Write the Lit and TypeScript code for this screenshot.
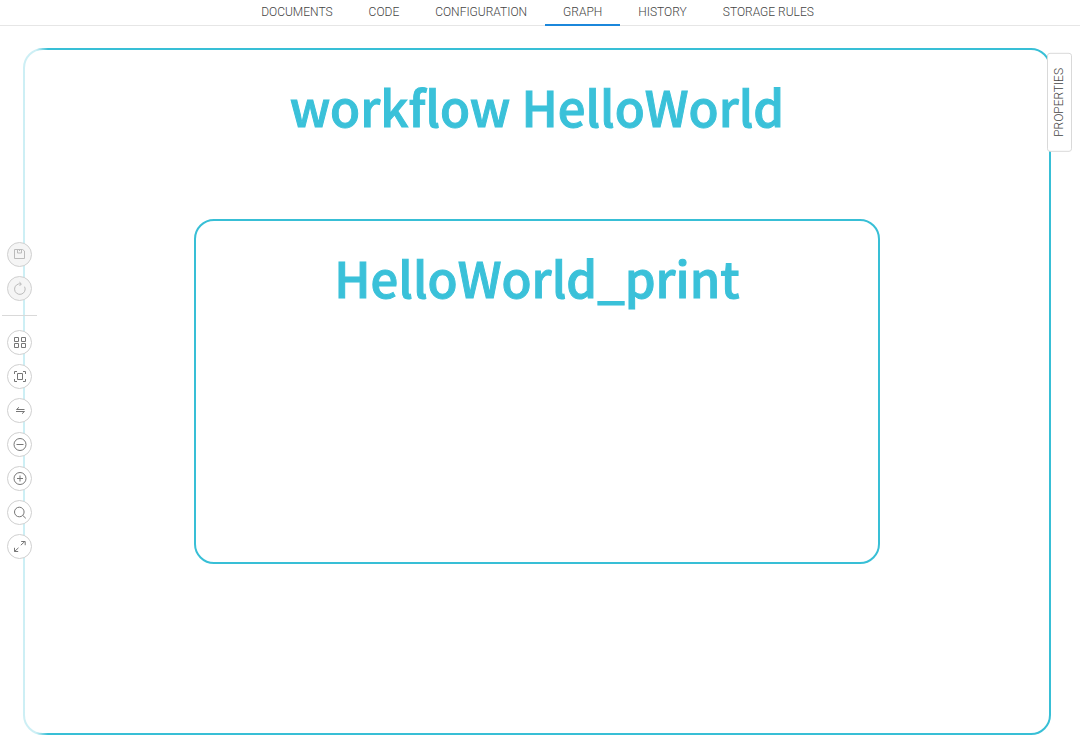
import { LitElement, html, css, svg } from "lit";
import { customElement, state } from "lit/decorators.js";

const TABS = ["Documents", "Code", "Configuration", "Graph", "History", "Storage rules"];

const TOOLS = [
  { label: "Save", off: true, icon: svg`<path d="M1.5 1.5h8l2 1.5v7.5h-10z M4.5 1.5v3.5h4v-3.5 M6.5 1.5v1.5"/>` },
  { label: "Refresh", off: true, icon: svg`<path d="M11.6 4.7A5.3 5.3 0 1 1 8 1.9 M6.4 0.1L8.4 1.9 6.6 3.9"/>` },
  { label: "Layout", icon: svg`<path d="M1.5 1.5h4v4h-4z M8.5 1.5h4v4h-4z M1.5 7.5h4v4h-4z M8.5 7.5h4v4h-4z"/>` },
  { label: "Fit", icon: svg`<path d="M4.5 3.5h5v6h-5z M1.5 4v-2.5h2.5 M10 1.5h2.5v2.5 M12.5 9v2.5h-2.5 M4 11.5h-2.5v-2.5"/>` },
  { label: "Swap", icon: svg`<path d="M11.5 5.5h-8l2.5-2.2 M3 7.5h8.5l-2.5 2.2"/>` },
  { label: "Zoom out", icon: svg`<circle cx="7" cy="6.5" r="6"/><path d="M3.5 6.5h7"/>` },
  { label: "Zoom in", icon: svg`<circle cx="7" cy="6.5" r="6"/><path d="M4 6.5h6 M7 3.5v6"/>` },
  { label: "Search", icon: svg`<circle cx="6.3" cy="6" r="4.8"/><path d="M9.8 9.5l3 2.8"/>` },
  { label: "Full screen", icon: svg`<path d="M7.8 5.2l4-3.7 M8.2 1.5h4v3.7 M5.5 7.8l-4 3.7 M1.5 7.8v3.7h3.7"/>` },
];

@customElement("app-root")
export class AppRoot extends LitElement {
  @state() private active = "Graph";

  static styles = css`
    :host {
      display: flex;
      flex-direction: column;
      position: relative;
      box-sizing: border-box;
      min-height: 100vh;
      background: #fff;
      color: #444;
      font-family: Roboto, sans-serif;
      font-weight: 300;
    }
    button {
      font: inherit;
      color: inherit;
      padding: 0;
      margin: 0;
      cursor: pointer;
    }
    .tabs {
      display: flex;
      justify-content: center;
      height: 25px;
      padding-right: 5px;
      border-bottom: 1px solid #e6e6e6;
    }
    .tab {
      height: 26px;
      padding: 1px 18px 0;
      border: 0;
      border-bottom: 2px solid transparent;
      background: none;
      font-size: 12px;
      line-height: 23px;
      text-transform: uppercase;
    }
    .tab.active {
      border-bottom-color: #1b87db;
    }
    .canvas {
      display: flex;
      flex: 1;
      padding: 22px 29px 8px 23px;
    }
    .node {
      box-sizing: border-box;
      border: 2px solid #38bfd6;
      border-radius: 20px;
    }
    .workflow {
      flex: 1;
      display: flex;
      flex-direction: column;
      align-items: center;
    }
    .task {
      width: 67%;
      height: 345px;
      margin-top: 75px;
    }
    .title {
      margin: 0;
      padding-top: 18px;
      color: #3ac1d9;
      font-family: "Noto Sans CJK SC", sans-serif;
      font-size: 49px;
      font-weight: 500;
      line-height: 76px;
      text-align: center;
      -webkit-text-stroke: 1px #3ac1d9;
    }
    .tools {
      position: absolute;
      left: 0;
      top: 26px;
      bottom: 0;
      width: 48px;
      display: flex;
      flex-direction: column;
      justify-content: center;
      align-items: center;
      gap: 9px;
      padding: 31px 9px 0 0;
      box-sizing: border-box;
      background: linear-gradient(to right, rgba(255, 255, 255, 0.75) 36px, rgba(255, 255, 255, 0) 48px);
    }
    .tool {
      display: flex;
      align-items: center;
      justify-content: center;
      box-sizing: border-box;
      width: 25px;
      height: 25px;
      border: 1px solid #d0d0d0;
      border-radius: 50%;
      background: #fff;
      color: #777;
    }
    .tool:disabled {
      background: #f5f5f5;
      color: #bbb;
    }
    .tool svg {
      width: 13px;
      height: 13px;
      overflow: visible;
      fill: none;
      stroke: currentColor;
    }
    .rule {
      width: 35px;
      margin: 5px 0;
      border: 0;
      border-top: 1px solid #d9d9d9;
    }
    .properties {
      position: absolute;
      top: 53px;
      right: 8px;
      box-sizing: border-box;
      width: 25px;
      padding: 14px 0;
      border: 1px solid #d9d9d9;
      border-radius: 3px;
      background: #fff;
      font-size: 12px;
      line-height: 23px;
      text-transform: uppercase;
      writing-mode: vertical-rl;
      transform: rotate(180deg);
    }
  `;

  render() {
    return html`
      <nav class="tabs" role="tablist">
        ${TABS.map(
          (t) => html`<button
            class="tab ${t === this.active ? "active" : ""}"
            role="tab"
            aria-selected=${t === this.active}
            @click=${() => (this.active = t)}
          >${t}</button>`
        )}
      </nav>
      <main class="canvas">
        <section class="node workflow">
          <h1 class="title">workflow HelloWorld</h1>
          <section class="node task"><h2 class="title">HelloWorld_print</h2></section>
        </section>
      </main>
      <div class="tools" role="toolbar">
        ${TOOLS.map(
          (t, i) => html`${i === 2 ? html`<hr class="rule" />` : ""}<button
              class="tool"
              aria-label=${t.label}
              ?disabled=${t.off}
            ><svg viewBox="0 0 13 13">${t.icon}</svg></button>`
        )}
      </div>
      <button class="properties">Properties</button>
    `;
  }
}
